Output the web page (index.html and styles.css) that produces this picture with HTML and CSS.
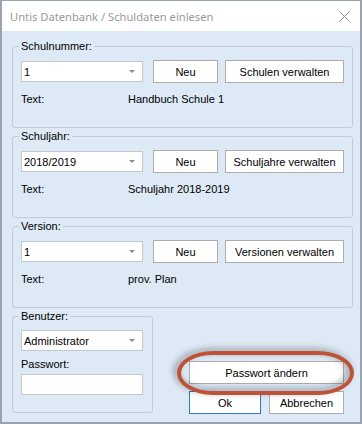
FILE: index.html
```html
<!DOCTYPE html>
<html lang="de">
<head>
<meta charset="utf-8">
<title>Untis Datenbank / Schuldaten einlesen</title>
<link rel="stylesheet" href="styles.css">
</head>
<body>
<div class="window">
  <div class="titlebar">
    <span class="title">Untis Datenbank / Schuldaten einlesen</span>
    <svg class="close" width="11" height="11" viewBox="0 0 11 11"><path d="M0.5 0.5 L10.5 10.5 M10.5 0.5 L0.5 10.5" stroke="#8a8a8a" stroke-width="1" fill="none"/></svg>
  </div>
  <div class="content">
    <fieldset class="group">
      <legend>Schulnummer:</legend>
      <div class="ctrl-row">
        <div class="combo"><span>1</span><i class="arrow"></i></div>
        <button class="btn btn-neu">Neu</button>
        <button class="btn btn-manage">Schulen verwalten</button>
      </div>
      <div class="info-row"><span class="info-label">Text:</span><span>Handbuch Schule 1</span></div>
    </fieldset>
    <fieldset class="group">
      <legend>Schuljahr:</legend>
      <div class="ctrl-row">
        <div class="combo"><span>2018/2019</span><i class="arrow"></i></div>
        <button class="btn btn-neu">Neu</button>
        <button class="btn btn-manage">Schuljahre verwalten</button>
      </div>
      <div class="info-row"><span class="info-label">Text:</span><span>Schuljahr 2018-2019</span></div>
    </fieldset>
    <fieldset class="group">
      <legend>Version:</legend>
      <div class="ctrl-row">
        <div class="combo"><span>1</span><i class="arrow"></i></div>
        <button class="btn btn-neu">Neu</button>
        <button class="btn btn-manage">Versionen verwalten</button>
      </div>
      <div class="info-row"><span class="info-label">Text:</span><span>prov. Plan</span></div>
    </fieldset>
    <div class="bottom">
      <fieldset class="group user">
        <legend>Benutzer:</legend>
        <div class="combo"><span>Administrator</span><i class="arrow"></i></div>
        <div class="pw-label">Passwort:</div>
        <div class="pw-input"></div>
      </fieldset>
      <div class="actions">
        <div class="pw-wrap">
          <button class="btn btn-pw">Passwort ändern</button>
          <span class="highlight"></span>
        </div>
        <div class="ok-row">
          <button class="btn btn-ok">Ok</button>
          <button class="btn btn-cancel">Abbrechen</button>
        </div>
      </div>
    </div>
  </div>
</div>
</body>
</html>
```
FILE: styles.css
```css
* { box-sizing: border-box; }
body {
  margin: 0;
  font-family: "Liberation Sans", Arial, sans-serif;
  font-size: 11px;
  color: #000;
}
.window {
  width: 362px;
  height: 424px;
  border: 2px solid #9aa4ae;
  border-top-width: 1px;
  background: #dde9f5;
  display: flex;
  flex-direction: column;
}
.titlebar {
  height: 30px;
  flex: none;
  background: #fff;
  display: flex;
  align-items: center;
  padding: 0 10px 0 8px;
}
.title {
  flex: 1;
  font-family: "Segoe UI", "Noto Sans", sans-serif;
  font-size: 11.2px;
  color: #999;
}
.close { display: block; }
.content {
  padding: 8px 7px 0 10px;
  display: flex;
  flex-direction: column;
  gap: 1px;
}
fieldset.group {
  margin: 0;
  min-width: 0;
  padding: 7px 8px 21px 8px;
  border: 1px solid #c3ccd5;
  border-radius: 3px;
}
legend {
  padding: 0 2px;
  margin-left: -2px;
  line-height: 14px;
}
.ctrl-row {
  display: flex;
  align-items: center;
  height: 23px;
}
.combo {
  width: 122px;
  height: 21px;
  flex: none;
  background: #fff;
  border: 1px solid #c5c9cd;
  display: flex;
  align-items: center;
  padding-left: 2px;
}
.arrow {
  margin-left: auto;
  margin-right: 7px;
  width: 0;
  height: 0;
  border-left: 3px solid transparent;
  border-right: 3px solid transparent;
  border-top: 3px solid #8a8a8a;
}
.btn {
  height: 23px;
  padding: 0;
  background: #fff;
  border: 1px solid #adadad;
  font: inherit;
  color: #000;
}
.btn-neu { width: 65px; margin-left: 10px; }
.btn-manage { width: 119px; margin-left: 7px; }
.info-row {
  display: flex;
  margin-top: 9px;
  line-height: 14px;
}
.info-label { width: 107px; }
.bottom {
  display: flex;
  align-items: flex-end;
  justify-content: space-between;
}
fieldset.user {
  width: 141px;
  padding: 7px 9px 17px 8px;
}
.pw-label {
  margin-top: 6px;
  line-height: 14px;
}
.pw-input {
  margin-top: 3px;
  width: 122px;
  height: 21px;
  background: #fff;
  border: 1px solid #c5c9cd;
}
.actions {
  width: 155px;
  margin-right: 9px;
  margin-bottom: -1px;
  display: flex;
  flex-direction: column;
  gap: 7px;
}
.pw-wrap { position: relative; }
.btn-pw { width: 155px; display: block; }
.ok-row { display: flex; gap: 8px; }
.btn-ok { width: 72px; border-color: #3277c2; }
.btn-cancel { width: 75px; }
.highlight {
  position: absolute;
  left: -12px;
  top: -10px;
  width: 177px;
  height: 44px;
  border: 4px solid #bf5136;
  border-radius: 36px / 22px;
  filter: drop-shadow(-3px -2px 3px rgba(0, 0, 0, 0.4));
  pointer-events: none;
}
```
